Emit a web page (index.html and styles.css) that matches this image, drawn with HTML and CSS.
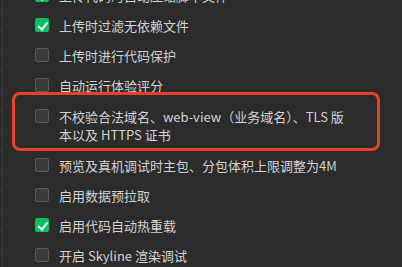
FILE: index.html
```html
<!DOCTYPE html>
<html lang="zh-CN">
<head>
    <meta charset="UTF-8">
    <meta name="viewport" content="width=device-width, initial-scale=1.0">
    <title>本地设置</title>
    <link rel="stylesheet" href="styles.css">
</head>
<body>
    <div class="rail"></div>

    <ul class="options">
        <li class="option">
            <span class="box checked"></span>
            <span class="label">上传代码时自动压缩脚本文件</span>
        </li>
        <li class="option">
            <span class="box checked"></span>
            <span class="label">上传时过滤无依赖文件</span>
        </li>
        <li class="option">
            <span class="box"></span>
            <span class="label">上传时进行代码保护</span>
        </li>
        <li class="option">
            <span class="box"></span>
            <span class="label">自动运行体验评分</span>
        </li>
        <li class="option option-tall">
            <span class="box"></span>
            <span class="label">不校验合法域名、web-view（业务域名）、TLS 版本以及 HTTPS 证书</span>
            <span class="highlight"></span>
        </li>
        <li class="option">
            <span class="box"></span>
            <span class="label">预览及真机调试时主包、分包体积上限调整为4M</span>
        </li>
        <li class="option">
            <span class="box"></span>
            <span class="label">启用数据预拉取</span>
        </li>
        <li class="option">
            <span class="box checked"></span>
            <span class="label">启用代码自动热重载</span>
        </li>
        <li class="option">
            <span class="box"></span>
            <span class="label">开启 Skyline 渲染调试</span>
        </li>
    </ul>
</body>
</html>
```

FILE: styles.css
```css
* {
    margin: 0;
    padding: 0;
    box-sizing: border-box;
}

body {
    font-family: "Noto Sans CJK SC", "Noto Sans", sans-serif;
    background: #2c2c2c;
    color: #d2d2d2;
    height: 267px;
    display: flex;
    overflow: hidden;
}

/* ruler on the left edge */
.rail {
    width: 3px;
    flex-shrink: 0;
    border-right: 1px solid #3c3c3c;
    background: repeating-linear-gradient(to bottom, transparent 0, transparent 11px, #3c3c3c 11px, #3c3c3c 12px, transparent 12px, transparent 20px);
}

.options {
    list-style: none;
    flex: 1;
    margin-top: -19px;
    padding-left: 32px;
}

.option {
    position: relative;
    display: flex;
    align-items: flex-start;
    gap: 10px;
    padding: 6px 0;
    font-size: 13px;
    line-height: 18px;
}

.option-tall {
    padding: 7px 0;
}

.box {
    width: 14px;
    height: 14px;
    margin-top: 1px;
    flex-shrink: 0;
    border: 1px solid #5a5a5a;
    border-radius: 2px;
    background: #3b3b3b;
}

.box.checked {
    border-color: #07c160;
    background: #07c160;
    position: relative;
}

.box.checked::after {
    content: "";
    position: absolute;
    left: 4px;
    top: 1px;
    width: 4px;
    height: 8px;
    border: solid #fff;
    border-width: 0 2px 2px 0;
    transform: rotate(40deg);
}

.label {
    width: 292px;
}

/* red annotation frame */
.highlight {
    position: absolute;
    top: -9px;
    bottom: 0;
    left: -23px;
    right: 22px;
    border: 3px solid #e8412c;
    border-radius: 8px;
    pointer-events: none;
}
```
